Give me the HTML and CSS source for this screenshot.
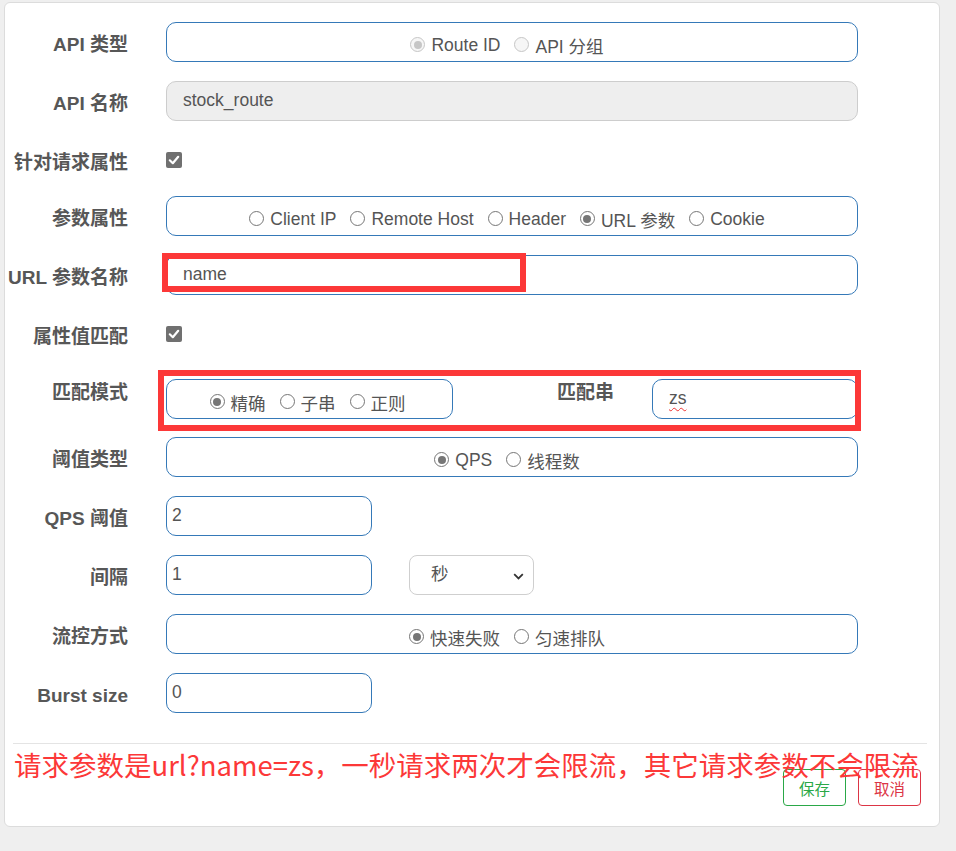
FILE: index.html
```html
<!DOCTYPE html>
<html lang="zh-CN">
<head>
<meta charset="utf-8">
<title>网关流控规则</title>
<link rel="stylesheet" href="styles.css">
</head>
<body>
<div class="card">
  <div class="row">
    <div class="label">API 类型</div>
    <div class="box group">
      <span class="opt"><span class="r dis on"></span>Route ID</span>
      <span class="opt"><span class="r dis"></span>API 分组</span>
    </div>
  </div>
  <div class="row">
    <div class="label">API 名称</div>
    <div class="box field readonly">stock_route</div>
  </div>
  <div class="row chk-row">
    <div class="label">针对请求属性</div>
    <span class="chk"><svg width="16" height="16" viewBox="0 0 16 16"><path d="M3.8 8.3 L6.8 11.2 L12.2 4.8" fill="none" stroke="#fff" stroke-width="2.2" stroke-linecap="round" stroke-linejoin="round"/></svg></span>
  </div>
  <div class="row">
    <div class="label">参数属性</div>
    <div class="box group">
      <span class="opt"><span class="r"></span>Client IP</span>
      <span class="opt"><span class="r"></span>Remote Host</span>
      <span class="opt"><span class="r"></span>Header</span>
      <span class="opt"><span class="r on"></span>URL 参数</span>
      <span class="opt"><span class="r"></span>Cookie</span>
    </div>
  </div>
  <div class="row">
    <div class="label">URL 参数名称</div>
    <div class="box field">name</div>
  </div>
  <div class="row chk-row">
    <div class="label">属性值匹配</div>
    <span class="chk"><svg width="16" height="16" viewBox="0 0 16 16"><path d="M3.8 8.3 L6.8 11.2 L12.2 4.8" fill="none" stroke="#fff" stroke-width="2.2" stroke-linecap="round" stroke-linejoin="round"/></svg></span>
  </div>
  <div class="row match-row">
    <div class="label">匹配模式</div>
    <div class="box group match-group">
      <span class="opt"><span class="r on"></span>精确</span>
      <span class="opt"><span class="r"></span>子串</span>
      <span class="opt"><span class="r"></span>正则</span>
    </div>
    <div class="label sub-label">匹配串</div>
    <div class="box field small-field"><span class="spell">zs</span></div>
  </div>
  <div class="row">
    <div class="label">阈值类型</div>
    <div class="box group">
      <span class="opt"><span class="r on"></span>QPS</span>
      <span class="opt"><span class="r"></span>线程数</span>
    </div>
  </div>
  <div class="row">
    <div class="label">QPS 阈值</div>
    <div class="box field num">2</div>
  </div>
  <div class="row">
    <div class="label">间隔</div>
    <div class="box field num">1</div>
    <div class="select">秒<svg class="chev" width="11" height="7" viewBox="0 0 11 7"><path d="M1.2 1.2 L5.5 5.4 L9.8 1.2" fill="none" stroke="#333" stroke-width="1.8"/></svg></div>
  </div>
  <div class="row">
    <div class="label">流控方式</div>
    <div class="box group">
      <span class="opt"><span class="r on"></span>快速失败</span>
      <span class="opt"><span class="r"></span>匀速排队</span>
    </div>
  </div>
  <div class="row">
    <div class="label">Burst size</div>
    <div class="box field num">0</div>
  </div>

  <hr class="divider">
  <div class="footer">
    <button class="btn btn-save">保存</button>
    <button class="btn btn-cancel">取消</button>
  </div>

  <div class="mark mark-url"></div>
  <div class="mark mark-match"></div>
  <div class="note">请求参数是url?name=zs，一秒请求两次才会限流，其它请求参数不会限流</div>
</div>
</body>
</html>
```
FILE: styles.css
```css
html, body {
  margin: 0;
  padding: 0;
}
body {
  background: #efefef;
  font-family: "Liberation Sans", "Noto Sans CJK SC", sans-serif;
  color: #555;
  width: 956px;
  height: 851px;
  overflow: hidden;
}
.card {
  position: relative;
  box-sizing: border-box;
  margin: 2px 0 0 4px;
  width: 936px;
  height: 825px;
  background: #fff;
  border: 1px solid #dcdcdc;
  border-radius: 6px;
  padding-top: 19px;
}
.row {
  display: flex;
  align-items: flex-start;
  height: 40px;
  margin-bottom: 19px;
}
.chk-row {
  margin-bottom: 16px;
}
.match-row {
  height: 49px;
  margin-bottom: 18px;
}
.label {
  flex: 0 0 123px;
  box-sizing: border-box;
  text-align: right;
  font-weight: bold;
  font-size: 19px;
  line-height: 40px;
  padding-top: 3px;
  margin-right: 38px;
  color: #575757;
  white-space: nowrap;
}
.box {
  box-sizing: border-box;
  width: 692px;
  height: 40px;
  border: 1px solid #3579b8;
  border-radius: 10px;
  font-size: 17.5px;
  color: #555;
}
.group {
  display: flex;
  justify-content: center;
  align-items: center;
  padding-top: 7px;
  padding-right: 10px;
}
.opt {
  display: inline-flex;
  align-items: center;
  margin: 0 7px;
  white-space: nowrap;
}
.r {
  position: relative;
  display: inline-block;
  box-sizing: border-box;
  width: 15px;
  height: 15px;
  border: 1px solid #767676;
  border-radius: 50%;
  background: #fff;
  margin-right: 6px;
  margin-top: -2px;
}
.r.on::after {
  content: "";
  position: absolute;
  left: 2.5px;
  top: 2.5px;
  width: 8px;
  height: 8px;
  border-radius: 50%;
  background: #767676;
}
.r.dis {
  border-color: #c6c6c6;
  background: #f6f6f6;
}
.r.dis.on::after {
  background: #c6c6c6;
}
.field {
  padding-left: 16px;
  line-height: 37px;
}
.readonly {
  background: #eee;
  border-color: #cdcdcd;
}
.chk {
  display: block;
  width: 16px;
  height: 16px;
  margin-top: 12px;
  border-radius: 2px;
  background: #707070;
}
.chk svg {
  display: block;
}
.match-group {
  width: 287px;
  margin-top: 9px;
  padding-right: 4px;
}
.sub-label {
  flex: 0 0 161px;
  margin-right: 38px;
}
.small-field {
  width: 206px;
  margin-top: 9px;
}
.spell {
  text-decoration: underline wavy #e33;
  text-decoration-thickness: 1px;
  text-underline-offset: 3px;
}
.num {
  width: 206px;
  padding-left: 5px;
}
.select {
  box-sizing: border-box;
  position: relative;
  width: 125px;
  height: 40px;
  margin-left: 37px;
  border: 1px solid #cfcfcf;
  border-radius: 8px;
  font-size: 17.5px;
  line-height: 37px;
  padding-left: 21px;
  color: #555;
}
.chev {
  position: absolute;
  right: 9px;
  top: 17px;
}
.divider {
  border: 0;
  border-top: 1px solid #e4e4e4;
  margin: 30px 12px 0 8px;
}
.footer {
  display: flex;
  justify-content: flex-end;
  gap: 12px;
  margin-top: 25px;
  padding-right: 18px;
}
.btn {
  box-sizing: border-box;
  width: 63px;
  height: 37px;
  background: #fff;
  border-radius: 4px;
  font-family: "Liberation Sans", "Noto Sans CJK SC", sans-serif;
  font-size: 15.5px;
  padding: 0;
}
.btn-save {
  border: 1px solid #2aa847;
  color: #2aa847;
}
.btn-cancel {
  border: 1px solid #dc3545;
  color: #dc3545;
}
.mark {
  position: absolute;
  box-sizing: border-box;
  border: 6px solid #fc3838;
}
.mark-url {
  left: 157px;
  top: 250px;
  width: 364px;
  height: 39px;
}
.mark-match {
  left: 153px;
  top: 367px;
  width: 703px;
  height: 61px;
}
.note {
  position: absolute;
  left: 9px;
  top: 745px;
  font-family: "Noto Sans CJK SC", sans-serif;
  font-size: 27.5px;
  line-height: 32px;
  color: #fc3838;
  white-space: nowrap;
}
```
